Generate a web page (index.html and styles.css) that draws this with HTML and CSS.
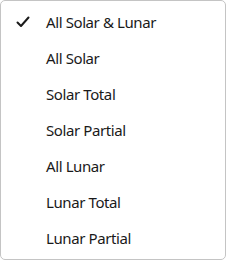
FILE: index.html
```html
<!DOCTYPE html>
<html>
<head>
<meta charset="utf-8">
<link rel="stylesheet" href="styles.css">
</head>
<body>
<ul class="menu">
  <li class="item checked"><span class="check"><svg width="14" height="12" viewBox="0 0 14 12"><path d="M1.5 6.5 L5 10 L12.5 1.5" fill="none" stroke="#1a1a1a" stroke-width="2" stroke-linecap="round" stroke-linejoin="round"/></svg></span><span class="label">All Solar &amp; Lunar</span></li>
  <li class="item"><span class="check"></span><span class="label">All Solar</span></li>
  <li class="item"><span class="check"></span><span class="label">Solar Total</span></li>
  <li class="item"><span class="check"></span><span class="label">Solar Partial</span></li>
  <li class="item"><span class="check"></span><span class="label">All Lunar</span></li>
  <li class="item"><span class="check"></span><span class="label">Lunar Total</span></li>
  <li class="item"><span class="check"></span><span class="label">Lunar Partial</span></li>
</ul>
</body>
</html>
```
FILE: styles.css
```css
html, body {
  margin: 0;
  padding: 0;
  background: #ffffff;
}
.menu {
  list-style: none;
  margin: 0;
  box-sizing: border-box;
  width: 226px;
  height: 260px;
  padding: 3px 0 3px 0;
  border: 1px solid #c4c4c4;
  border-radius: 5px;
  background: #ffffff;
  font-family: "Noto Sans", "Open Sans", sans-serif;
  font-size: 15px;
  letter-spacing: -0.4px;
  color: #1a1a1a;
}
.item {
  height: 36px;
  display: flex;
  align-items: center;
}
.check {
  width: 45px;
  display: flex;
  justify-content: flex-start;
  padding-left: 15px;
  box-sizing: border-box;
}
.check svg {
  display: block;
}
.label {
  white-space: nowrap;
}
```
